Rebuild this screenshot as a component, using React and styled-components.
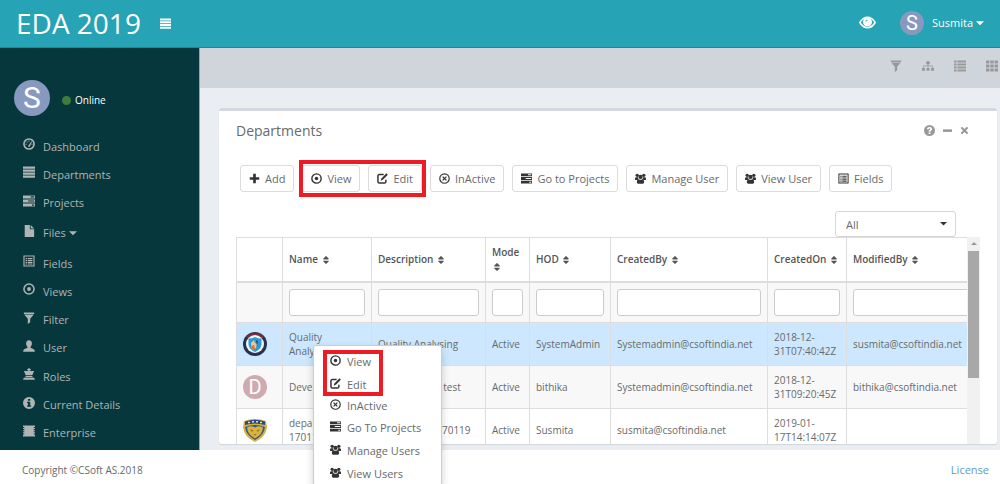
import React, { useState } from 'react';
import styled, { createGlobalStyle } from 'styled-components';
import { FaSort, FaSitemap } from 'react-icons/fa';

const GlobalStyle = createGlobalStyle`
  * {
    box-sizing: border-box;
  }
  body {
    margin: 0;
    overflow: hidden;
    font-family: 'Open Sans', 'Noto Sans', sans-serif;
    font-size: 11px;
    color: #676a6c;
    background: #fff;
  }
  button, input, select {
    font-family: inherit;
    font-size: inherit;
    color: inherit;
  }
`

const Svg = styled.svg`
  display: block;
  flex: none;
  width: ${props => props.$size}px;
  height: ${props => props.$size}px;
  fill: currentColor;
`

// all glyphs share a 14x14 grid
const glyphs = {
  bars: <path d="M0 .6h14v2.500H0zM0 4.100h14v2.500H0zM0 7.600h14v2.500H0zM0 11.100h14v2.500H0z" />,
  tasks: <path fillRule="evenodd" d="M0 .5h14v3.6H0zM9 1.5v1.4h4V1.5zM0 5.2h14v3.6H0zM6 6.3v1.4h7V6.3zM0 9.9h14v3.6H0zM10.5 11v1.4H13V11z" />,
  dashboard: (
    <g>
      <circle cx="7" cy="7" r="5.9" fill="none" stroke="currentColor" strokeWidth="1.9" />
      <path d="M6 9.3l3.8-5.4.6.5-2.6 5.7a1.2 1.2 0 0 1-1.8-.8z" />
      <path d="M3 6.6h1.3v1.2H3zM4.2 4h1.2v1.2H4.2zM6.4 2.8h1.2V4H6.4zM9.9 6.6h1.2v1.2H9.9z" />
    </g>
  ),
  file: <path d="M2 0h6v5h5v9H2zM9 0l4 4H9z" />,
  listAlt: (
    <g>
      <path fillRule="evenodd" d="M.5.5h13v13H.5zM1.8 1.8v10.4h10.4V1.8z" />
      <path d="M3 3.4h1.6v1.4H3zM5.4 3.4H11v1.4H5.4zM3 5.6h1.6V7H3zM5.4 5.6H11V7H5.4zM3 7.8h1.6v1.4H3zM5.4 7.8H11v1.4H5.4zM3 10h1.6v1.2H3zM5.4 10H11v1.2H5.4z" />
    </g>
  ),
  record: (
    <g>
      <circle cx="7" cy="7" r="5.9" fill="none" stroke="currentColor" strokeWidth="1.8" />
      <circle cx="7" cy="7" r="2.2" />
    </g>
  ),
  filter: <path d="M1 .5h12v1.8H1zM1.4 3h11.2L8.4 8v4L5.6 14V8z" />,
  user: <path d="M7 .2c2.2 0 3.5 1.6 3.4 3.8-.1 1.8-.7 3-1.6 3.9v1.2c1 .9 4.4 1.4 4.9 3.1v1.5H.3v-1.5C.8 10.500 4.200 10 5.200 9.100V7.900C4.300 7 3.700 5.800 3.600 4 3.500 1.800 4.800.2 7 .2z" />,
  king: <path d="M6.300 0h1.400v1.200h1.400v1.300H7.900v1h5L11 8.200H3L1.100 3.500h5v-1H4.900V1.200h1.400zM3 9h8v1.400H3zM1.500 11.200h11V12h1.200v1.700H.3V12h1.200z" />,
  info: (
    <path fillRule="evenodd" d="M7 0a7 7 0 1 0 0 14A7 7 0 0 0 7 0zM5.800 2.200h2.600v2.100H5.800zM4.700 5.400h3.700v4.500h1.100v1.600H4.700V9.900h1.100V7H4.700z" />
  ),
  chip: <path d="M0 .5h14v1.800h-1.500v1.300H14v1.200h-1.500v1.300H14v1.200h-1.500v1.300H14v1.200h-1.500v1.300H14v2.400H0v-2.400h1.500V9.800H0V8.600h1.500V7.300H0V6.100h1.500V4.800H0V3.600h1.500V2.300H0z" />,
  plus: <path d="M5.300 1h3.400v4.300H13v3.400H8.700V13H5.300V8.700H1V5.300h4.300z" />,
  remove: (
    <g fill="none" stroke="currentColor">
      <circle cx="7" cy="7" r="6" strokeWidth="1.500" />
      <path d="M4.600 4.600l4.800 4.800M9.400 4.600L4.600 9.400" strokeWidth="1.600" />
    </g>
  ),
  edit: (
    <g>
      <path d="M8.500 2H3Q1.200 2 1.200 3.800v7.200q0 1.800 1.800 1.800h6.500q1.800 0 1.800-1.800V8.500" fill="none" stroke="currentColor" strokeWidth="1.900" />
      <path d="M12 .3l1.800 1.800-6.300 6.600-2.900 1.200 1-3z" />
    </g>
  ),
  users: (
    <g>
      <circle cx="2.800" cy="2.900" r="2.100" />
      <circle cx="11.200" cy="2.900" r="2.100" />
      <circle cx="7" cy="5" r="2.700" />
      <path d="M0 8.800V6.900q.2-1.600 1.500-1.600h2.300q0 2 1 2.700Q3.500 8 2.900 8.800zM14 8.800V6.900q-.2-1.600-1.500-1.600h-2.300q0 2-1 2.700 1.300 0 1.900.8zM2.300 11.500q0-3.400 2.500-3.500 2.200 1.300 4.400 0 2.500.1 2.500 3.500 0 2.300-1.800 2.300H4.100q-1.800 0-1.800-2.300z" />
    </g>
  ),
  eye: (
    <g>
      <path d="M.7 7Q3.200 2.700 7 2.700T13.300 7Q10.800 11.300 7 11.300T.7 7z" fill="none" stroke="currentColor" strokeWidth="1.300" />
      <path fillRule="evenodd" d="M7 2.900a3.700 3.700 0 1 0 0 7.400A3.700 3.700 0 0 0 7 2.900zM5.300 6.200Q5.500 4.800 7 4.600v.7q-1 .1-1.100 1z" />
    </g>
  ),
  list: <path d="M0 .5h3v2.400H0zM4 .5h10v2.400H4zM0 4h3v2.400H0zM4 4h10v2.400H4zM0 7.500h3v2.400H0zM4 7.500h10v2.400H4zM0 11h3v2.400H0zM4 11h10v2.400H4z" />,
  grid: <path d="M0 .5h4v3.600H0zM5 .5h4v3.600H5zM10 .5h4v3.600h-4zM0 5.200h4v3.600H0zM5 5.200h4v3.600H5zM10 5.200h4v3.600h-4zM0 9.900h4v3.600H0zM5 9.900h4v3.600H5zM10 9.900h4v3.600h-4z" />,
  question: (
    <path fillRule="evenodd" d="M7 0a7 7 0 1 0 0 14A7 7 0 0 0 7 0zM3.800 5.400q0-3 3.300-3 3.300 0 3.300 2.700 0 1.500-1.500 2.200-.6.400-.6 1.200H5.900q0-1.900 1.300-2.500.8-.4.800-1 0-.8-.9-.8-1 0-1 1.200zM5.900 9.500h2.400v2.100H5.900z" />
  ),
  minus: <path d="M0 5.200h14v4H0z" />,
  close: <path d="M3.200 1L7 4.700 10.800 1 13 3.200 9.300 7l3.700 3.800-2.200 2.200L7 9.300 3.200 13 1 10.800 4.700 7 1 3.200z" />,
  caret: <path d="M0 4h14L7 11z" />,
};

const Glyph = ({ name, size = 12 }) => (
  <Svg viewBox="0 0 14 14" $size={size} aria-hidden="true">{glyphs[name]}</Svg>
);

const Page = styled.div`
  display: flex;
  flex-direction: column;
  height: 100vh;
`
const Header = styled.header`
  display: flex;
  align-items: center;
  flex: none;
  height: 48px;
  padding: 0 16px;
  color: #fff;
  background: #26a3b4;
  border-bottom: 1px solid #1c8796;
`
const Brand = styled.a`
  padding-bottom: 2px;
  font-size: 28px;
  line-height: 44px;
  color: #fff;
  text-decoration: none;
`
const PlainButton = styled.button`
  display: flex;
  align-items: center;
  gap: ${props => props.$gap || 0}px;
  padding: 0;
  border: 0;
  background: none;
  color: inherit;
`
const HeaderRight = styled.div`
  display: flex;
  align-items: center;
  gap: 24px;
  margin-left: auto;
  padding-bottom: 2px;
`
const MenuToggle = styled(PlainButton)`
  margin-left: 19px;
`
const Avatar = styled.span`
  display: flex;
  align-items: center;
  justify-content: center;
  width: ${props => props.$size}px;
  height: ${props => props.$size}px;
  border-radius: 50%;
  font-family: Roboto, Arial, sans-serif;
  font-size: ${props => props.$font}px;
  line-height: 1;
  color: #fff;
  background: ${props => props.$color || '#8799bf'};
`
const Main = styled.div`
  display: flex;
  flex: 1;
  min-height: 0;
`
const Sidebar = styled.aside`
  display: flex;
  flex-direction: column;
  flex: none;
  width: 200px;
  color: #b0b4b3;
  background: #05373c;
  border-right: 1px solid #8fa5a8;
`
const UserPanel = styled.div`
  display: flex;
  align-items: center;
  gap: 12px;
  padding: 32px 14px 16px;
`
const Status = styled.a`
  display: flex;
  align-items: center;
  gap: 4px;
  padding-top: 4px;
  font-size: 10px;
  color: #fff;
  text-decoration: none;
`
const Dot = styled.span`
  width: 9px;
  height: 9px;
  border-radius: 50%;
  background: #3f7d3c;
`
const Nav = styled.nav`
  display: flex;
  flex-direction: column;
  flex: 1;
  padding-bottom: 3px;
`
const NavLink = styled.a`
  display: flex;
  align-items: center;
  flex: 1 1 ${props => (props.$wide ? 32 : 28)}px;
  gap: 8px;
  padding-left: 23px;
  color: inherit;
  text-decoration: none;
  > svg:first-child {
    margin-bottom: 4px;
  }
`
const NavLabel = styled.span`
  display: flex;
  align-items: center;
  gap: 3px;
`
const Content = styled.main`
  display: flex;
  flex-direction: column;
  flex: 1;
  min-width: 0;
  background: #eaedf2;
`
const ViewBar = styled.div`
  display: flex;
  align-items: center;
  justify-content: flex-end;
  gap: 20px;
  flex: none;
  height: 40px;
  padding: 0 2px 4px;
  color: #999;
  background: #d0d4db;
`
const Panel = styled.section`
  display: flex;
  flex-direction: column;
  flex: 1;
  min-height: 0;
  margin: 20px 3px 6px 19px;
  padding: 0 17px;
  background: #fff;
  border-top: 3px solid #d5d8e2;
  border-radius: 3px;
  box-shadow: 0 1px 1px rgba(0, 0, 0, 0.1);
`
const PanelHead = styled.div`
  display: flex;
  align-items: center;
  justify-content: space-between;
  height: 38px;
`
const Title = styled.h1`
  margin: 0;
  font-size: 14px;
  font-weight: 400;
`
const PanelTools = styled.div`
  display: flex;
  align-items: center;
  gap: 8px;
  padding-right: 11px;
  color: #999;
`
const Actions = styled.div`
  display: flex;
  gap: 8px;
  padding: 16px 4px 0;
`
const Marked = styled.div`
  position: relative;
  display: flex;
  gap: 8px;
  &::after {
    content: '';
    position: absolute;
    inset: -5px -4px -5px -3px;
    border: 4px solid #ed1c24;
    pointer-events: none;
  }
`
const ActionButton = styled.button`
  display: flex;
  align-items: center;
  gap: 5px;
  height: 27px;
  padding: 0 8px;
  white-space: nowrap;
  background: #fff;
  border: 1px solid #dcdcdc;
  border-radius: 3px;
  svg {
    color: #333;
  }
`
const FilterRow = styled.div`
  display: flex;
  justify-content: flex-end;
  padding: 19px 24px 0 0;
`
const SelectBox = styled.label`
  position: relative;
  width: 121px;
  svg {
    position: absolute;
    top: 9px;
    right: 9px;
    color: #333;
    pointer-events: none;
  }
`
const Select = styled.select`
  display: block;
  width: 100%;
  height: 26px;
  padding: 0 10px;
  appearance: none;
  background: #fff;
  border: 1px solid #d6d6d6;
  border-radius: 3px;
`
const TableArea = styled.div`
  display: flex;
  flex: 1;
  min-height: 0;
`
const TableClip = styled.div`
  flex: 1;
  min-width: 0;
  overflow: hidden;
`
const Table = styled.table`
  width: 771px;
  table-layout: fixed;
  border-collapse: collapse;
  font-size: 10px;
  line-height: 14px;
`
const Th = styled.th`
  height: 44px;
  padding: 0 6px;
  text-align: left;
  font-weight: 600;
  color: #555;
  border: 1px solid #ddd;
  border-bottom: 2px solid #ddd;
  svg {
    vertical-align: -2px;
  }
`
const Row = styled.tr`
  height: 43px;
  background: ${props => props.$color};
`
const FilterTr = styled.tr`
  height: 41px;
  background: #f8f8f8;
`
const Td = styled.td`
  padding: 0 6px;
  border: 1px solid #ddd;
`
const FilterInput = styled.input`
  display: block;
  width: 100%;
  height: 27px;
  padding: 0 6px;
  background: #fff;
  border: 1px solid #ccc;
  border-radius: 3px;
`
const Scrollbar = styled.div`
  display: flex;
  flex-direction: column;
  align-items: center;
  flex: none;
  width: 13px;
  background: #f1f1f1;
`
const ScrollArrow = styled.span`
  margin: 5px 0 6px;
  border: 3px solid transparent;
  border-top: 0;
  border-bottom-color: #999;
`
const Thumb = styled.span`
  width: 11px;
  height: 127px;
  background: #a8a8a8;
`
const Footer = styled.footer`
  display: flex;
  align-items: center;
  justify-content: space-between;
  flex: none;
  height: 34px;
  padding: 5px 11px 0 22px;
  font-size: 10px;
`
const FooterLink = styled.a`
  font-size: 11px;
  color: #5b9bc8;
  text-decoration: none;
`
const ContextMenu = styled.div`
  position: absolute;
  width: 129px;
  padding-top: 4px;
  background: #fff;
  border: 1px solid #ccc;
  border-radius: 3px;
  box-shadow: 0 4px 9px rgba(0, 0, 0, 0.18);
`
const MenuGroup = styled.div`
  display: flex;
  flex-direction: column;
  gap: 8px;
  width: 60px;
  margin-left: 9px;
  padding-left: 3px;
  border: 4px solid #ed1c24;
`
const MenuItem = styled.button`
  display: flex;
  align-items: center;
  gap: 6px;
  height: ${props => props.$height || 23}px;
  padding: 0 0 0 ${props => (props.$inGroup ? 0 : 16)}px;
  line-height: 14px;
  white-space: nowrap;
  border: 0;
  background: none;
  svg {
    color: #333;
    margin-bottom: 3px;
  }
`

const QualityLogo = () => (
  <Svg viewBox="0 0 24 24" $size={24}>
    <circle cx="12" cy="12" r="12" fill="#26324f" />
    <path d="M3 5a11.500 11.500 0 0 1 18 0l-2 1.500a9 9 0 0 0-14 0z" fill="#7b2c3c" />
    <circle cx="12" cy="12" r="9" fill="#f2f5f7" />
    <path d="M5.500 6.500q3.500 0 6.500-1.500 3 1.500 6.500 1.500v6q-.5 4.500-6.500 7.500-6-3-6.500-7.500z" fill="#2f9bd0" />
    <path d="M8 11l3-3 1 3 2 1-1 4-3 2-2-3z" fill="#e9c79d" />
    <path d="M8 14l3-1 1 4-2 1z" fill="#e0702f" />
    <path d="M13 8l2 1-1 5z" fill="#1d4c80" />
  </Svg>
);

const ShieldLogo = () => (
  <Svg viewBox="0 0 24 24" $size={24}>
    <path d="M1 3q11-4 22 0l1 6q-1 10-12 15Q1 19 0 9z" fill="#d3b23f" />
    <path d="M2 3.500q10-3.500 20 0v3.500q-10-3-20 0z" fill="#27498b" />
    <path d="M2 9q10-4 20 0-1 8-10 13Q3 17 2 9z" fill="#31558f" />
    <path d="M4 9.500q4-2.500 8 0 4-2.500 8 0-.5 7-8 11-7.500-4-8-11z" fill="#d9b33c" />
    <path d="M7 11l3.500 1.500L9 14zM17 11l-3.500 1.500L15 14zM10.500 16h3L12 18z" fill="#927a2c" />
    <path d="M5 4.600h2M9 3.800h2M13 3.800h2M17 4.600h2" stroke="#f0df91" strokeWidth="1.500" />
  </Svg>
);

const navItems = [
  { icon: 'dashboard', label: 'Dashboard' },
  { icon: 'bars', label: 'Departments' },
  { icon: 'tasks', label: 'Projects' },
  { icon: 'file', label: 'Files', caret: true },
  { icon: 'listAlt', label: 'Fields' },
  { icon: 'record', label: 'Views' },
  { icon: 'filter', label: 'Filter' },
  { icon: 'user', label: 'User' },
  { icon: 'king', label: 'Roles' },
  { icon: 'info', label: 'Current Details' },
  { icon: 'chip', label: 'Enterprise' },
];

const columns = [
  { label: '', width: 46 },
  { label: 'Name', width: 89 },
  { label: 'Description', width: 114 },
  { label: 'Mode', width: 44 },
  { label: 'HOD', width: 81 },
  { label: 'CreatedBy', width: 157 },
  { label: 'CreatedOn', width: 79 },
  { label: 'ModifiedBy', width: 161 },
];

const rows = [
  {
    color: '#cde8fe',
    logo: <QualityLogo />,
    cells: ['Quality Analysing', 'Quality Analysing', 'Active', 'SystemAdmin', 'Systemadmin@csoftindia.net', '2018-12-31T07:40:42Z', 'susmita@csoftindia.net'],
  },
  {
    color: '#f8f8f8',
    logo: <Avatar $size={24} $font={20} $color="#d0aab1">D</Avatar>,
    cells: ['Development', 'Development test', 'Active', 'bithika', 'Systemadmin@csoftindia.net', '2018-12-31T09:20:45Z', 'bithika@csoftindia.net'],
  },
  {
    color: '#fff',
    logo: <ShieldLogo />,
    cells: ['department 170119', 'department 170119', 'Active', 'Susmita', 'susmita@csoftindia.net', '2019-01-17T14:14:07Z', ''],
  },
];

const Action = ({ icon, label }) => (
  <ActionButton type="button"><Glyph name={icon} size={11} />{label}</ActionButton>
);

const DepartmentTable = () => (
  <Table>
    <colgroup>
      {columns.map((col, i) => <col key={i} style={{ width: col.width }} />)}
    </colgroup>
    <thead>
      <tr>
        {columns.map((col, i) => (
          <Th key={i} scope="col">{col.label}{col.label && <> <FaSort size={10} /></>}</Th>
        ))}
      </tr>
    </thead>
    <tbody>
      <FilterTr>
        {columns.map((col, i) => (
          <Td key={i}>{col.label && <FilterInput type="text" aria-label={col.label} />}</Td>
        ))}
      </FilterTr>
      {rows.map((row, i) => (
        <Row key={i} $color={row.color}>
          <Td>{row.logo}</Td>
          {row.cells.map((cell, j) => <Td key={j}>{cell}</Td>)}
        </Row>
      ))}
    </tbody>
  </Table>
);

export default function App() {
  const [menu] = useState({ left: 313, top: 345 });

  return (
    <Page>
      <GlobalStyle />
      <Header>
        <Brand href="#">EDA 2019</Brand>
        <MenuToggle type="button" aria-label="Toggle menu"><Glyph name="bars" size={11} /></MenuToggle>
        <HeaderRight>
          <PlainButton type="button" aria-label="Watch"><Glyph name="eye" size={17} /></PlainButton>
          <PlainButton type="button" $gap={8}>
            <Avatar $size={24} $font={20}>S</Avatar>
            <NavLabel>Susmita<Glyph name="caret" size={8} /></NavLabel>
          </PlainButton>
        </HeaderRight>
      </Header>

      <Main>
        <Sidebar>
          <UserPanel>
            <Avatar $size={36} $font={30}>S</Avatar>
            <Status href="#"><Dot />Online</Status>
          </UserPanel>
          <Nav>
            {navItems.map(item => (
              <NavLink key={item.label} href="#" $wide={item.caret}>
                <Glyph name={item.icon} />
                <NavLabel>{item.label}{item.caret && <Glyph name="caret" size={8} />}</NavLabel>
              </NavLink>
            ))}
          </Nav>
        </Sidebar>

        <Content>
          <ViewBar>
            <PlainButton type="button" aria-label="Filter"><Glyph name="filter" /></PlainButton>
            <PlainButton type="button" aria-label="Tree"><FaSitemap size={12} /></PlainButton>
            <PlainButton type="button" aria-label="List"><Glyph name="list" /></PlainButton>
            <PlainButton type="button" aria-label="Grid"><Glyph name="grid" /></PlainButton>
          </ViewBar>

          <Panel>
            <PanelHead>
              <Title>Departments</Title>
              <PanelTools>
                <PlainButton type="button" aria-label="Help"><Glyph name="question" size={11} /></PlainButton>
                <PlainButton type="button" aria-label="Collapse"><Glyph name="minus" size={9} /></PlainButton>
                <PlainButton type="button" aria-label="Close"><Glyph name="close" size={9} /></PlainButton>
              </PanelTools>
            </PanelHead>

            <Actions>
              <Action icon="plus" label="Add" />
              <Marked>
                <Action icon="record" label="View" />
                <Action icon="edit" label="Edit" />
              </Marked>
              <Action icon="remove" label="InActive" />
              <Action icon="tasks" label="Go to Projects" />
              <Action icon="users" label="Manage User" />
              <Action icon="users" label="View User" />
              <Action icon="listAlt" label="Fields" />
            </Actions>

            <FilterRow>
              <SelectBox>
                <Select aria-label="Mode filter" defaultValue="All">
                  <option>All</option>
                  <option>Active</option>
                  <option>InActive</option>
                </Select>
                <Glyph name="caret" size={7} />
              </SelectBox>
            </FilterRow>

            <TableArea>
              <TableClip><DepartmentTable /></TableClip>
              <Scrollbar><ScrollArrow /><Thumb /></Scrollbar>
            </TableArea>
          </Panel>
        </Content>
      </Main>

      <Footer>
        <span>Copyright ©CSoft AS.2018</span>
        <FooterLink href="#">License</FooterLink>
      </Footer>

      <ContextMenu style={menu}>
        <MenuGroup>
          <MenuItem type="button" $inGroup $height={16}><Glyph name="record" size={11} />View</MenuItem>
          <MenuItem type="button" $inGroup $height={14}><Glyph name="edit" size={11} />Edit</MenuItem>
        </MenuGroup>
        <MenuItem type="button" $height={20}><Glyph name="remove" size={11} />InActive</MenuItem>
        <MenuItem type="button"><Glyph name="tasks" size={11} />Go To Projects</MenuItem>
        <MenuItem type="button"><Glyph name="users" size={11} />Manage Users</MenuItem>
        <MenuItem type="button"><Glyph name="users" size={11} />View Users</MenuItem>
      </ContextMenu>
    </Page>
  );
}
